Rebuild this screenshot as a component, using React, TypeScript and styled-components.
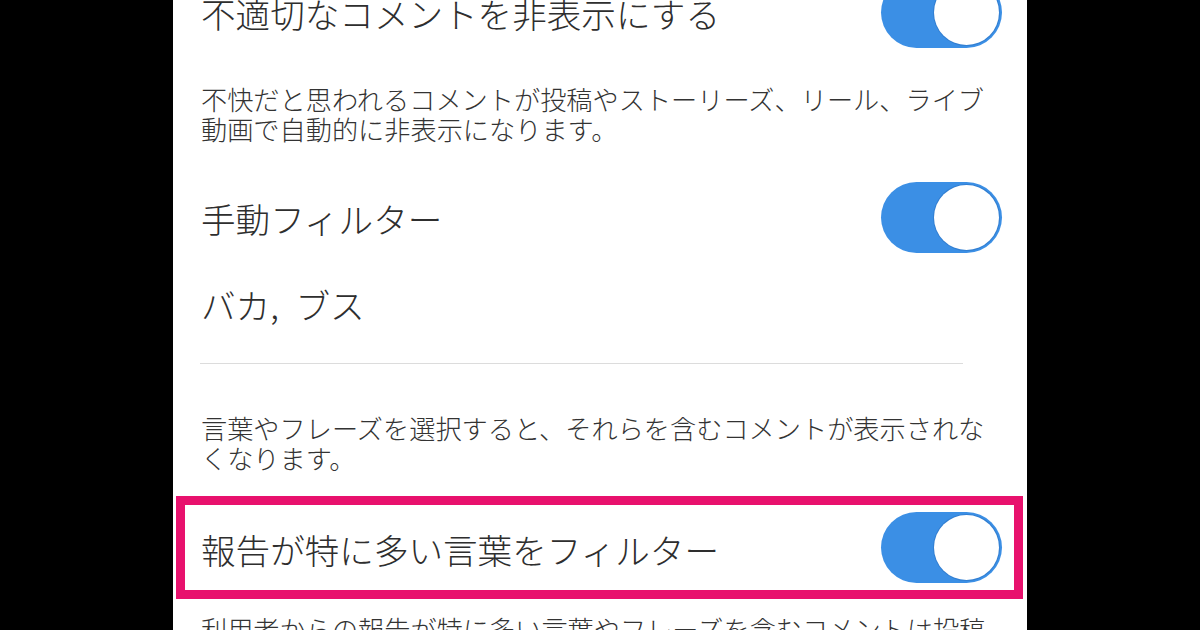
import React from "react";
import styled, { createGlobalStyle } from "styled-components";

const GlobalStyle = createGlobalStyle`
  html, body {
    margin: 0;
    padding: 0;
    background: #000;
  }
  body {
    font-family: "Noto Sans CJK JP", "Noto Sans", sans-serif;
  }
`;

const Screen = styled.div`
  width: 1200px;
  height: 630px;
  overflow: hidden;
  background: #000;
  display: flex;
  justify-content: center;
`;

const Panel = styled.div`
  width: 854px;
  height: 630px;
  box-sizing: border-box;
  background: #fff;
  overflow: hidden;
  padding: 0 25px 0 28px;
`;

const Content = styled.div`
  display: flex;
  flex-direction: column;
  margin-top: -31px;
`;

const Row = styled.div<{ $highlighted?: boolean; $mt?: number }>`
  display: flex;
  align-items: center;
  justify-content: space-between;
  box-sizing: border-box;
  height: ${(p) => (p.$highlighted ? 103 : 86)}px;
  margin-top: ${(p) => p.$mt ?? 0}px;
  ${(p) =>
    p.$highlighted
      ? `
    border: 9px solid #e8116d;
    margin-left: -25px;
    margin-right: -21px;
    padding: 0 12px 0 16px;
  `
      : ""}
`;

const Title = styled.span`
  font-size: 34.6px;
  font-weight: 300;
  line-height: 1;
  color: #2e2e2e;
  white-space: nowrap;
  padding-top: 3px;
`;

const Comma = styled.span`
  margin-right: 9px;
`;

const Description = styled.p<{ $mt: number }>`
  margin: ${(p) => p.$mt}px 0 0;
  font-size: 26.2px;
  font-weight: 300;
  line-height: 30px;
  color: #333;
  white-space: nowrap;
`;

const Divider = styled.hr`
  margin: 17px 39px 0 -1px;
  border: none;
  height: 1px;
  background: #dcdcdc;
`;

const Track = styled.div`
  width: 121px;
  height: 71px;
  box-sizing: border-box;
  border-radius: 36px;
  background: #3b8fe5;
  display: flex;
  align-items: center;
  justify-content: flex-end;
  padding: 0 3px;
  flex-shrink: 0;
`;

const Knob = styled.div`
  width: 65px;
  height: 65px;
  border-radius: 50%;
  background: #fff;
  box-shadow: 0 0 0 1px rgba(40, 110, 190, 0.5);
`;

const Toggle: React.FC = () => (
  <Track>
    <Knob />
  </Track>
);

export default function App() {
  return (
    <>
      <GlobalStyle />
      <Screen>
        <Panel>
          <Content>
            <Row>
              <Title>不適切なコメントを非表示にする</Title>
              <Toggle />
            </Row>
            <Description $mt={29}>
              不快だと思われるコメントが投稿やストーリーズ、リール、ライブ
              <br />
              動画で自動的に非表示になります。
            </Description>
            <Row $mt={30}>
              <Title>手動フィルター</Title>
              <Toggle />
            </Row>
            <Row>
              <Title>
                バカ<Comma>,</Comma> ブス
              </Title>
            </Row>
            <Divider />
            <Description $mt={49}>
              言葉やフレーズを選択すると、それらを含むコメントが表示されな
              <br />
              くなります。
            </Description>
            <Row $highlighted $mt={23}>
              <Title>報告が特に多い言葉をフィルター</Title>
              <Toggle />
            </Row>
            <Description $mt={15}>
              利用者からの報告が特に多い言葉やフレーズを含むコメントは投稿
              <br />
              やストーリーズ、リール、ライブ動画で表示されなくなります。
            </Description>
          </Content>
        </Panel>
      </Screen>
    </>
  );
}
